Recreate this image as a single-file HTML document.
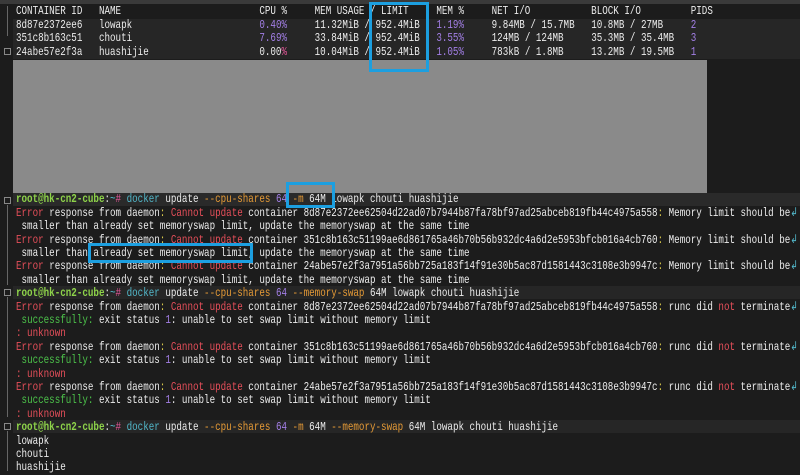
<!DOCTYPE html>
<html><head><meta charset="utf-8"><style>
html,body{margin:0;padding:0;background:#1c1c1c;width:800px;height:475px;overflow:hidden;position:relative;}
.t{position:absolute;left:16px;top:0;width:1050px;transform:scaleX(0.768);transform-origin:0 0;font-family:"Liberation Mono",monospace;font-size:12px;color:#ececec;}
.l{position:absolute;left:0;height:13.4px;line-height:13.4px;white-space:pre;}
.bg{position:absolute;left:13px;width:787px;height:13.4px;}
.g{color:#8ed34a;font-weight:bold}.b{color:#52b7c9}.p{color:#e8579b}.o{color:#e59a36}.v{color:#a37fe6}.r{color:#e64f5a}.y{color:#d9c84a}.s{color:#4cc24a}
.box{position:absolute;border:3px solid #1c9fe0;box-sizing:border-box;}
.gut{position:absolute;left:4px;width:7px;height:7px;border:1px solid #888;box-sizing:border-box;}
.vl{position:absolute;left:7px;width:1px;background:#666;}
</style></head><body>
<div style="position:absolute;left:0;top:0;width:800px;height:4px;background:#3a3a3a"></div>
<div class="bg" style="top:18.5px;height:40px;background:#262626"></div>
<div class="bg" style="top:193px;background:#2a2a2a"></div>
<div class="bg" style="top:286px;background:#262626"></div>
<div class="bg" style="top:420px;background:#262626"></div>
<div style="position:absolute;left:13px;top:60px;width:694px;height:133px;background:#8a8a8a"></div>
<div class="vl" style="top:6px;height:30px"></div>
<div class="gut" style="top:48px"></div>
<div class="gut" style="top:197px"></div><div class="vl" style="top:205px;height:80px"></div>
<div class="gut" style="top:289px"></div><div class="vl" style="top:297px;height:120px"></div>
<div class="gut" style="top:423px"></div><div class="vl" style="top:431px;height:40px"></div>
<div class="t">
<div class="l" style="top:5.3px">CONTAINER ID   NAME                         CPU %     MEM USAGE / LIMIT     MEM %     NET I/O           BLOCK I/O         PIDS</div>
<div class="l" style="top:18.7px">8d87e2372ee6   lowapk                       <span class="v">0.40%</span>     11.32MiB / 952.4MiB   <span class="v">1.19%</span>     9.84MB / 15.7MB   10.8MB / 27MB     <span class="v">2</span></div>
<div class="l" style="top:32.1px">351c8b163c51   chouti                       <span class="v">7.69%</span>     33.84MiB / 952.4MiB   <span class="v">3.55%</span>     124MB / 124MB     35.3MB / 35.4MB   <span class="v">3</span></div>
<div class="l" style="top:45.5px">24abe57e2f3a   huashijie                    0.00<span class="p">%</span>     10.04MiB / 952.4MiB   <span class="v">1.05%</span>     783kB / 1.8MB     13.2MB / 19.5MB   <span class="v">1</span></div>

<div class="l" style="top:193.3px"><span class="g">root@hk-cn2-cube</span>:<span class="b">~</span><span class="p">#</span> <span class="b">docker</span> update <span class="o">--cpu-shares</span> <span class="v">64</span> <span class="o">-m</span> 64M lowapk chouti huashijie</div>
<div class="l" style="top:206.7px"><span class="r">Error</span> response from daemon<span class="y">:</span> <span class="r">Cannot update</span> container 8d87e2372ee62504d22ad07b7944b87fa78bf97ad25abceb819fb44c4975a558<span class="y">:</span> Memory limit should be<span class="b">↲</span></div>
<div class="l" style="top:220.1px"> smaller than already set memoryswap limit, update the memoryswap at the same time</div>
<div class="l" style="top:233.5px"><span class="r">Error</span> response from daemon<span class="y">:</span> <span class="r">Cannot update</span> container 351c8b163c51199ae6d861765a46b70b56b932dc4a6d2e5953bfcb016a4cb760<span class="y">:</span> Memory limit should be<span class="b">↲</span></div>
<div class="l" style="top:246.9px"> smaller than already set memoryswap limit, update the memoryswap at the same time</div>
<div class="l" style="top:260.3px"><span class="r">Error</span> response from daemon<span class="y">:</span> <span class="r">Cannot update</span> container 24abe57e2f3a7951a56bb725a183f14f91e30b5ac87d1581443c3108e3b9947c<span class="y">:</span> Memory limit should be<span class="b">↲</span></div>
<div class="l" style="top:273.7px"> smaller than already set memoryswap limit, update the memoryswap at the same time</div>
<div class="l" style="top:287.1px"><span class="g">root@hk-cn2-cube</span>:<span class="b">~</span><span class="p">#</span> <span class="b">docker</span> update <span class="o">--cpu-shares</span> <span class="v">64</span> <span class="o">--memory-swap</span> 64M lowapk chouti huashijie</div>
<div class="l" style="top:300.5px"><span class="r">Error</span> response from daemon<span class="y">:</span> <span class="r">Cannot update</span> container 8d87e2372ee62504d22ad07b7944b87fa78bf97ad25abceb819fb44c4975a558<span class="y">:</span> runc did <span class="r">not</span> terminate<span class="b">↲</span></div>
<div class="l" style="top:313.9px"> <span class="s">successfully:</span> exit status <span class="v">1</span>: unable to set swap limit without memory limit</div>
<div class="l" style="top:327.3px"><span class="r">: unknown</span></div>
<div class="l" style="top:340.7px"><span class="r">Error</span> response from daemon<span class="y">:</span> <span class="r">Cannot update</span> container 351c8b163c51199ae6d861765a46b70b56b932dc4a6d2e5953bfcb016a4cb760<span class="y">:</span> runc did <span class="r">not</span> terminate<span class="b">↲</span></div>
<div class="l" style="top:354.1px"> <span class="s">successfully:</span> exit status <span class="v">1</span>: unable to set swap limit without memory limit</div>
<div class="l" style="top:367.5px"><span class="r">: unknown</span></div>
<div class="l" style="top:380.9px"><span class="r">Error</span> response from daemon<span class="y">:</span> <span class="r">Cannot update</span> container 24abe57e2f3a7951a56bb725a183f14f91e30b5ac87d1581443c3108e3b9947c<span class="y">:</span> runc did <span class="r">not</span> terminate<span class="b">↲</span></div>
<div class="l" style="top:394.3px"> <span class="s">successfully:</span> exit status <span class="v">1</span>: unable to set swap limit without memory limit</div>
<div class="l" style="top:407.7px"><span class="r">: unknown</span></div>
<div class="l" style="top:421.1px"><span class="g">root@hk-cn2-cube</span>:<span class="b">~</span><span class="p">#</span> <span class="b">docker</span> update <span class="o">--cpu-shares</span> <span class="v">64</span> <span class="o">-m</span> 64M <span class="o">--memory-swap</span> 64M lowapk chouti huashijie</div>
<div class="l" style="top:434.5px">lowapk</div>
<div class="l" style="top:447.9px">chouti</div>
<div class="l" style="top:461.3px">huashijie</div>
</div>
<div class="box" style="left:369px;top:2px;width:60px;height:70px"></div>
<div class="box" style="left:286px;top:182px;width:49px;height:26px"></div>
<div class="box" style="left:88px;top:243px;width:165px;height:20px"></div>
</body></html>
